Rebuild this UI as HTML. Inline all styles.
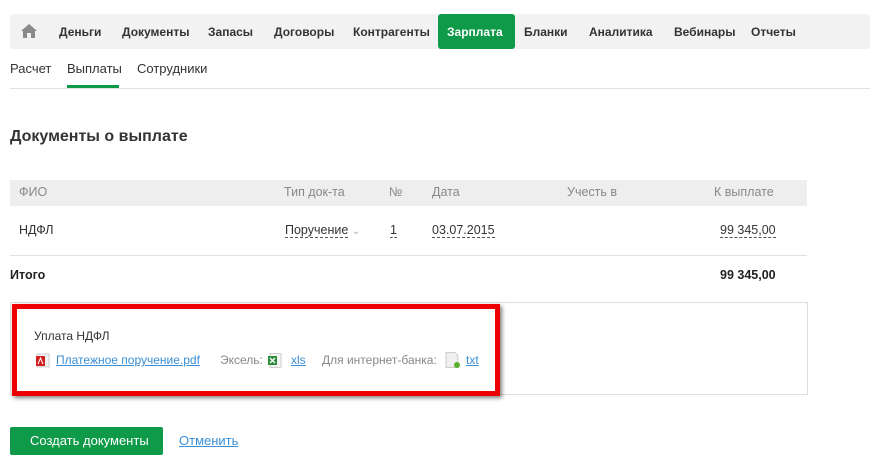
<!DOCTYPE html>
<html><head><meta charset="utf-8"><style>
*{margin:0;padding:0;box-sizing:border-box}
body{width:883px;height:469px;background:#fff;font-family:"Liberation Sans",sans-serif;color:#333;position:relative;overflow:hidden}
.abs{position:absolute;white-space:nowrap}
.nav{position:absolute;left:10px;top:14px;width:860px;height:35px;background:#f2f2f2;border-radius:3px}
.nav span{position:absolute;top:11px;font-size:12px;font-weight:bold;color:#333}
.green{position:absolute;left:438px;top:14px;width:77px;height:35px;background:#0e9a48;border-radius:3px}
.n{font-family:"Liberation Sans Narrow","Liberation Sans",sans-serif;font-size:12.5px}
.dash{border-bottom:1px dashed #555}
a{color:#3a8fd6;text-decoration:underline}
</style></head><body>
<div class="nav">
<svg style="position:absolute;left:11px;top:10px" width="16" height="14" viewBox="0 0 16 14"><path d="M8 0L0 7h2v7h4V9h4v5h4V7h2z" fill="#8a8a8a"/></svg>
<span style="left:49px">Деньги</span>
<span style="left:112px">Документы</span>
<span style="left:198px">Запасы</span>
<span style="left:264px">Договоры</span>
<span style="left:343px">Контрагенты</span>
<span style="left:514px">Бланки</span>
<span style="left:579px">Аналитика</span>
<span style="left:664px">Вебинары</span>
<span style="left:741px">Отчеты</span>
</div>
<div class="green"><span class="abs" style="left:9px;top:11px;font-size:12px;font-weight:bold;color:#fff">Зарплата</span></div>
<div class="abs" style="left:10px;top:61px;font-size:13px">Расчет</div>
<div class="abs" style="left:67px;top:61px;font-size:13px">Выплаты</div>
<div class="abs" style="left:137px;top:61px;font-size:13px">Сотрудники</div>
<div class="abs" style="left:67px;top:85px;width:52px;height:3px;background:#0e9a48"></div>
<div class="abs" style="left:10px;top:88px;width:860px;height:1px;background:#e0e0e0"></div>
<div class="abs" style="left:10px;top:128px;font-size:16px;font-weight:bold;color:#333">Документы о выплате</div>
<div class="abs" style="left:10px;top:180px;width:797px;height:26px;background:#eeeeee"></div>
<div class="abs n" style="left:19px;top:185px;color:#888">ФИО</div>
<div class="abs n" style="left:284px;top:185px;color:#888">Тип док-та</div>
<div class="abs n" style="left:389px;top:185px;color:#888">№</div>
<div class="abs n" style="left:432px;top:185px;color:#888">Дата</div>
<div class="abs n" style="left:567px;top:185px;color:#888">Учесть в</div>
<div class="abs n" style="left:714px;top:185px;color:#888">К выплате</div>
<div class="abs n" style="left:19px;top:223px;color:#333">НДФЛ</div>
<div class="abs n" style="left:285px;top:223px;color:#333"><span class="dash">Поручение</span> <span style="color:#aaa;font-size:10px">⌄</span></div>
<div class="abs n" style="left:390px;top:223px;color:#333"><span class="dash">1</span></div>
<div class="abs n" style="left:432px;top:223px;color:#333"><span class="dash">03.07.2015</span></div>
<div class="abs n" style="left:720px;top:223px;color:#333"><span class="dash">99 345,00</span></div>
<div class="abs" style="left:10px;top:255px;width:797px;height:1px;background:#e0e0e0"></div>
<div class="abs n" style="left:10px;top:268px;font-weight:bold;color:#222">Итого</div>
<div class="abs n" style="left:720px;top:268px;font-weight:bold;color:#222">99 345,00</div>
<div class="abs" style="left:10px;top:302px;width:798px;height:93px;border:1px solid #ddd"></div>
<div class="abs" style="left:12px;top:304px;width:488px;height:92px;border:5px solid #ee0000;box-shadow:2px 2px 4px rgba(0,0,0,.5)"></div>
<div class="abs" style="left:34px;top:329px;font-size:12px;color:#333">Уплата НДФЛ</div>
<svg class="abs" style="left:36px;top:353px" width="14" height="15" viewBox="0 0 14 15"><rect x="1" y="1" width="12" height="13" fill="#f4f4f4" stroke="#ccc"/><rect x="0" y="3" width="9" height="10" fill="#d21f1f"/><path d="M2 11l2.5-6 2.5 6" stroke="#fff" fill="none"/></svg>
<div class="abs" style="left:56px;top:353px;font-size:12px"><a>Платежное поручение.pdf</a></div>
<div class="abs" style="left:220px;top:353px;font-size:12px;color:#888">Эксель:</div>
<svg class="abs" style="left:268px;top:353px" width="15" height="15" viewBox="0 0 15 15"><rect x="2" y="0.5" width="11" height="14" fill="#f4f4f4" stroke="#ccc"/><rect x="0" y="3" width="9" height="9" fill="#2e8b3a"/><path d="M2 5l5 5M7 5l-5 5" stroke="#fff" stroke-width="1.3"/></svg>
<div class="abs" style="left:291px;top:353px;font-size:12px"><a>xls</a></div>
<div class="abs" style="left:322px;top:353px;font-size:12px;color:#888">Для интернет-банка:</div>
<svg class="abs" style="left:445px;top:352px" width="16" height="17" viewBox="0 0 16 17"><path d="M1 0.5h9l3 3v12H1z" fill="#f0f0f0" stroke="#ccc"/><circle cx="12" cy="13" r="3" fill="#5bb030"/></svg>
<div class="abs" style="left:466px;top:353px;font-size:12px"><a>txt</a></div>
<div class="abs" style="left:10px;top:427px;width:153px;height:28px;background:#0e9a48;border-radius:2px"></div>
<div class="abs" style="left:30px;top:433px;font-size:13px;color:#fff">Создать документы</div>
<div class="abs" style="left:179px;top:433px;font-size:13px"><a>Отменить</a></div>
</body></html>
